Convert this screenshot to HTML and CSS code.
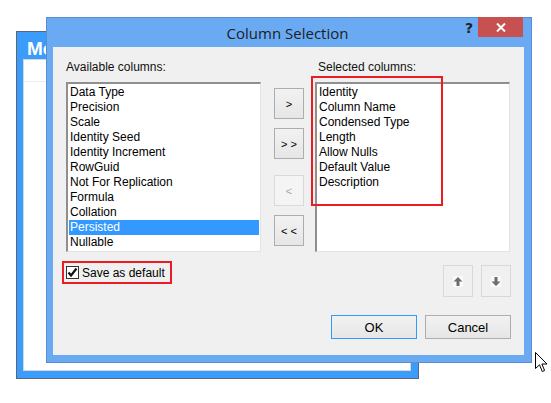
FILE: index.html
```html
<!DOCTYPE html>
<html>
<head>
<meta charset="utf-8">
<link rel="stylesheet" href="styles.css">
</head>
<body>
<div class="bgwin">
  <div class="bgwin-title">Me</div>
  <div class="bgwin-body"><div class="bgwin-line"></div></div>
</div>

<div class="dialog">
  <div class="titlebar">
    <span class="title">Column Selection</span>
    <span class="help">?</span>
    <span class="close"><svg width="10" height="9" viewBox="0 0 10 9"><path d="M1 0.5 L9 8.5 M9 0.5 L1 8.5" stroke="#fff" stroke-width="2"/></svg></span>
  </div>
  <div class="content">
    <div class="columns">
      <div class="col">
        <div class="label">Available columns:</div>
        <ul class="list">
          <li>Data Type</li>
          <li>Precision</li>
          <li>Scale</li>
          <li>Identity Seed</li>
          <li>Identity Increment</li>
          <li>RowGuid</li>
          <li>Not For Replication</li>
          <li>Formula</li>
          <li>Collation</li>
          <li class="sel">Persisted</li>
          <li>Nullable</li>
        </ul>
      </div>
      <div class="movebtns">
        <button class="btn mv b1">&gt;</button>
        <button class="btn mv b2">&gt; &gt;</button>
        <button class="btn mv b3 disabled">&lt;</button>
        <button class="btn mv b4">&lt; &lt;</button>
      </div>
      <div class="col right">
        <div class="label">Selected columns:</div>
        <ul class="list">
          <li>Identity</li>
          <li>Column Name</li>
          <li>Condensed Type</li>
          <li>Length</li>
          <li>Allow Nulls</li>
          <li>Default Value</li>
          <li>Description</li>
        </ul>
        <div class="redbox"></div>
      </div>
    </div>
    <div class="lower">
      <label class="check">
        <span class="box"><svg width="11" height="11" viewBox="0 0 11 11"><path d="M1.5 5.5 L4 8.5 L9.5 1.5" stroke="#111" stroke-width="2.2" fill="none"/></svg></span>
        <span>Save as default</span>
      </label>
      <div class="orderbtns">
        <button class="btn ord"><svg width="10" height="11" viewBox="0 0 10 11"><rect width="10" height="11" fill="#fafafa"/><path d="M5 1 L9.5 5.5 L6.5 5.5 L6.5 10 L3.5 10 L3.5 5.5 L0.5 5.5 Z" fill="#6d6d6d"/></svg></button>
        <button class="btn ord"><svg width="10" height="11" viewBox="0 0 10 11"><rect width="10" height="11" fill="#fafafa"/><path d="M5 10 L9.5 5.5 L6.5 5.5 L6.5 1 L3.5 1 L3.5 5.5 L0.5 5.5 Z" fill="#6d6d6d"/></svg></button>
      </div>
    </div>
    <div class="actions">
      <button class="btn act ok">OK</button>
      <button class="btn act">Cancel</button>
    </div>
  </div>
</div>

<svg class="cursor" width="13" height="21" viewBox="0 0 13 21"><path d="M0.5 0.5 L0.5 16.5 L4.5 12.8 L7.3 19.5 L9.6 18.5 L6.9 12 L12 12 Z" fill="#fff" stroke="#000" stroke-width="1"/></svg>
</body>
</html>
```
FILE: styles.css
```css
* { box-sizing: border-box; }
html, body { margin: 0; padding: 0; background: #fff; }
body {
  width: 551px; height: 403px; position: relative; overflow: hidden;
  font-family: "Liberation Sans", Arial, sans-serif; font-size: 12px; color: #000;
}
.bgwin {
  position: absolute; left: 16px; top: 31px; width: 403px; height: 348px;
  background: #3c9cfc; border: 1px solid #5b6676;
  padding: 0 7px 7px 6px; display: flex; flex-direction: column;
}
.bgwin-title {
  height: 27px; color: #fff; font-weight: bold; font-size: 19px;
  padding: 7px 0 0 4px; line-height: 20px;
}
.bgwin-body { flex: 1; background: #fff; border: 1px solid #d7d7d7; position: relative; }
.bgwin-line { margin-top: 21px; height: 1px; background: #e8eef7; }

.dialog {
  position: absolute; left: 46px; top: 17px; width: 486px; height: 346px;
  background: #69aaf3; border: 1px solid #5a8dcf;
  padding: 0 7px 7px 6px; display: flex; flex-direction: column;
}
.titlebar { height: 29px; position: relative; display: flex; justify-content: center; }
.title { font-family: "Open Sans", sans-serif; font-size: 15px; color: #1e1e1e; line-height: 20px; padding-top: 5px; margin-left: -2px; }
.help { position: absolute; right: 51px; top: 2px; font-weight: bold; font-size: 14px; color: #222; font-family: "DejaVu Sans", sans-serif; }
.close {
  position: absolute; right: 1px; top: -1px; width: 45px; height: 20px;
  background: #c75050; display: flex; align-items: center; justify-content: center;
}
.content { flex: 1; background: #f0f0f0; padding: 0 0 0 13px; position: relative; }
.columns { display: flex; }
.col { width: 195px; position: relative; }
.label { height: 35px; padding-top: 13px; line-height: 14px; color: #111; }
.right .label { padding-left: 3px; }
.list {
  list-style: none; margin: 0; padding: 1px 1px 0 1px; height: 170px; background: #fff;
  border-top: 2px solid #8f8f8f; border-left: 2px solid #8f8f8f;
  border-right: 1px solid #e3e3e3; border-bottom: 1px solid #e3e3e3;
}
.list li { height: 15px; line-height: 15px; padding-left: 1px; white-space: nowrap; }
.list li.sel { background: #3399ff; color: #fff; }
.redbox {
  position: absolute; left: -4px; top: 29px; width: 132px; height: 130px;
  border: 2px solid #ec1c24;
}
.movebtns { width: 30px; margin: 35px 11px 0 13px; display: flex; flex-direction: column; }
.btn {
  font-family: "Liberation Sans", Arial, sans-serif; font-size: 12px; color: #000;
  background: linear-gradient(#f2f2f2, #e6e6e6); border: 1px solid #adadad; padding: 0;
}
.mv { height: 31px; width: 30px; font-size: 11px; }
.b1 { margin-top: 6px; }
.b2 { margin-top: 9px; }
.b3 { margin-top: 16px; }
.b4 { margin-top: 9px; }
.disabled { border-color: #d9d9d9; color: #a8a8a8; background: #f4f4f4; }
.lower { display: flex; justify-content: space-between; margin-top: 13px; height: 32px; }
.check {
  display: flex; align-items: center; gap: 3px; height: 23px; margin: -4px 0 0 -4px;
  border: 2px solid #ec1c24; padding: 0 2px 0 2px; width: 110px;
}
.box {
  width: 13px; height: 13px; border: 1px solid #333; background: #fff;
  display: flex; align-items: center; justify-content: center;
}
.orderbtns { display: flex; gap: 8px; margin-right: 13px; }
.ord { width: 30px; height: 32px; border-color: #d8d8d8; background: #f0f0f0; display: flex; align-items: center; justify-content: center; }
.actions { display: flex; gap: 8px; justify-content: flex-end; margin: 18px 13px 0 0; }
.act { width: 86px; height: 24px; font-size: 13px; }
.ok { border-color: #3399ff; }
.cursor { position: absolute; left: 535px; top: 352px; }
```
